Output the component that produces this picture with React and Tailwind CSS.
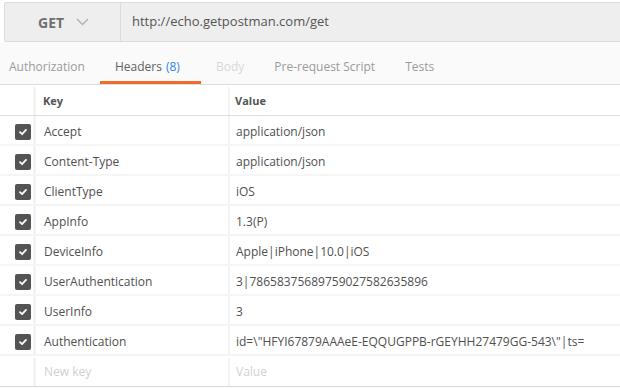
import React from 'react'

const headers = [
  ['Accept', 'application/json'],
  ['Content-Type', 'application/json'],
  ['ClientType', 'iOS'],
  ['AppInfo', '1.3(P)'],
  ['DeviceInfo', 'Apple|iPhone|10.0|iOS'],
  ['UserAuthentication', '3|78658375689759027582635896'],
  ['UserInfo', '3'],
  ['Authentication', 'id=\\"HFYI67879AAAeE-EQQUGPPB-rGEYHH27479GG-543\\"|ts='],
]

function Check() {
  return (
    <div className="w-[16px] h-[16px] rounded-[2px] bg-[#545454] flex items-center justify-center">
      <svg width="10" height="10" viewBox="0 0 10 10">
        <path d="M2 5.2 L4.1 7.2 L8 2.9" fill="none" stroke="#fff" strokeWidth="1.8" strokeLinecap="round" strokeLinejoin="round" />
      </svg>
    </div>
  )
}

export default function App() {
  return (
    <div className="w-[620px] h-[388px] bg-white overflow-hidden font-['Open_Sans',sans-serif] text-[12px] text-[#505050]">
      <div className="pt-[2px]">
        <div className="ml-[4px] h-[40px] flex bg-[#eeeeee] border border-r-0 border-[#dcdcdc] rounded-l-[2px]">
          <div className="w-[116px] flex items-center border-r border-[#dcdcdc]">
            <span className="ml-[33px] text-[14px] font-bold text-[#707070]">GET</span>
            <svg className="ml-[12px]" width="13" height="8" viewBox="0 0 13 8">
              <path d="M1 1 L6.5 6.5 L12 1" fill="none" stroke="#b0b0b0" strokeWidth="1.3" />
            </svg>
          </div>
          <div className="flex items-center pl-[11px] text-[13px] text-[#555]">http://echo.getpostman.com/get</div>
        </div>
      </div>

      <div className="h-[43px] bg-[#fafafa] border-b border-[#dddddd] flex text-[12px]">
        <div className="w-[100px] flex items-center pt-[8px] pl-[9px] text-[#9a9a9a]">Authorization</div>
        <div className="w-[101px] flex items-center border-b-[3px] border-[#f26b2a] pt-[11px] pl-[15px] text-[#606060]">
          Headers <span className="ml-[4px] text-[#2d87e2]">(8)</span>
        </div>
        <div className="flex items-center pt-[8px] pl-[15px] text-[#d8d8d8]">Body</div>
        <div className="flex items-center pt-[8px] pl-[30px] text-[#9a9a9a]">Pre-request Script</div>
        <div className="flex items-center pt-[8px] pl-[30px] text-[#9a9a9a]">Tests</div>
      </div>

      <div className="flex h-[31px] pt-[2px] border-b border-[#dddddd] text-[11px] font-bold text-[#555]">
        <div className="w-[36px] border-r-[3px] border-[#f3f3f3]" />
        <div className="w-[194px] border-r-[2px] border-[#f3f3f3] flex items-center pl-[7px]">Key</div>
        <div className="flex-1 flex items-center pl-[5px]">Value</div>
      </div>

      {headers.map(([k, v]) => (
        <div key={k} className="flex h-[30px] border-b-2 border-[#f5f5f5]">
          <div className="w-[36px] pt-[3px] border-r-[3px] border-[#f3f3f3] flex items-center justify-end pr-[2px]">
            <Check />
          </div>
          <div className="w-[194px] pt-[3px] border-r-[2px] border-[#f3f3f3] flex items-center pl-[8px]">{k}</div>
          <div className="flex-1 pt-[3px] flex items-center pl-[6px] whitespace-nowrap">{v}</div>
        </div>
      ))}

      <div className="flex h-[31px] pt-[2px] border-b border-[#d8d8d8] text-[#d0d0d0]">
        <div className="w-[36px] border-r-[3px] border-[#f3f3f3]" />
        <div className="w-[194px] border-r-[2px] border-[#f3f3f3] flex items-center pl-[8px]">New key</div>
        <div className="flex-1 flex items-center pl-[6px]">Value</div>
      </div>
    </div>
  )
}
